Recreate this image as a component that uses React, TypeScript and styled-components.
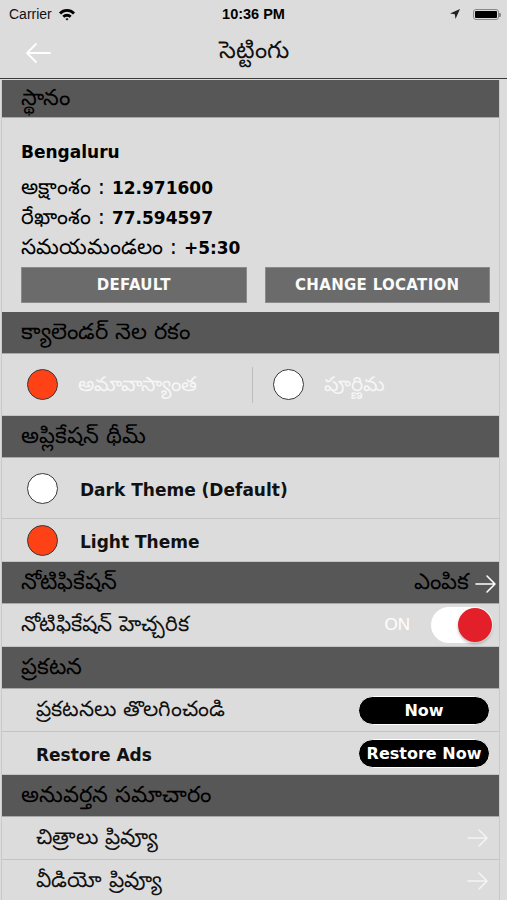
import React from "react";
import styled, { createGlobalStyle } from "styled-components";

const GlobalStyle = createGlobalStyle`
  html, body {
    margin: 0;
    padding: 0;
    background: #dcdcdc;
    font-family: "DejaVu Sans", "Noto Sans", sans-serif;
  }
`;

function App() {
  return (
    <Page>
      <GlobalStyle />
      <StatusBar>
        <Carrier>
          Carrier
          <svg width="18" height="13" viewBox="0 0 18 13">
            <path d="M1 4.5 A11 11 0 0 1 17 4.5 L15 6.5 A8 8 0 0 0 3 6.5 Z" fill="#000" />
            <path d="M4.3 7.8 A6.5 6.5 0 0 1 13.7 7.8 L11.7 9.8 A3.7 3.7 0 0 0 6.3 9.8 Z" fill="#000" />
            <path d="M7.5 11 A2.2 2.2 0 0 1 10.5 11 L9 12.6 Z" fill="#000" />
          </svg>
        </Carrier>
        <Clock>10:36 PM</Clock>
        <StatusRight>
          <svg width="12" height="12" viewBox="0 0 12 12">
            <path d="M11 1 L1 5.5 L5.8 6.2 L6.5 11 Z" fill="#222" />
          </svg>
          <Battery>
            <BatteryFill />
          </Battery>
        </StatusRight>
      </StatusBar>
      <NavBar>
        <BackButton>
          <svg width="28" height="22" viewBox="0 0 28 22">
            <path d="M26 11 H3 M12 2 L3 11 L12 20" stroke="#fff" strokeWidth="1.8" fill="none" strokeLinecap="round" strokeLinejoin="round" />
          </svg>
        </BackButton>
        <Title>సెట్టింగు</Title>
      </NavBar>
      <List>
        <SectionHeader $h={38}>స్థానం</SectionHeader>
        <LocationCard>
          <CityName>Bengaluru</CityName>
          <InfoLine>అక్షాంశం : <Num>12.971600</Num></InfoLine>
          <InfoLine>రేఖాంశం : <Num>77.594597</Num></InfoLine>
          <InfoLine>సమయమండలం : <Num>+5:30</Num></InfoLine>
          <ButtonRow>
            <GreyButton>DEFAULT</GreyButton>
            <GreyButton>CHANGE LOCATION</GreyButton>
          </ButtonRow>
        </LocationCard>

        <SectionHeader>క్యాలెండర్ నెల రకం</SectionHeader>
        <RadioPair>
          <RadioOption>
            <Radio $on />
            <RadioLabel>అమావాస్యాంత</RadioLabel>
          </RadioOption>
          <VDivider />
          <RadioOption>
            <Radio />
            <RadioLabel>పూర్ణిమ</RadioLabel>
          </RadioOption>
        </RadioPair>

        <SectionHeader>అప్లికేషన్ థీమ్</SectionHeader>
        <ThemeRow $h={61}>
          <Radio />
          <EnglishLabel>Dark Theme (Default)</EnglishLabel>
        </ThemeRow>
        <ThemeRow $h={43}>
          <Radio $on />
          <EnglishLabel>Light Theme</EnglishLabel>
        </ThemeRow>

        <SectionHeader>
          <span>నోటిఫికేషన్</span>
          <HeaderAction>
            ఎంపిక
            <Arrow color="#fff" />
          </HeaderAction>
        </SectionHeader>
        <Row $indent={19}>
          <RowText>నోటిఫికేషన్ హెచ్చరిక</RowText>
          <ToggleWrap>
            <OnText>ON</OnText>
            <Toggle>
              <Knob />
            </Toggle>
          </ToggleWrap>
        </Row>

        <SectionHeader>ప్రకటన</SectionHeader>
        <Row $indent={34}>
          <RowText>ప్రకటనలు తొలగించండి</RowText>
          <PillButton>Now</PillButton>
        </Row>
        <Row $indent={34}>
          <EnglishLabel>Restore Ads</EnglishLabel>
          <PillButton>Restore Now</PillButton>
        </Row>

        <SectionHeader>అనువర్తన సమాచారం</SectionHeader>
        <Row $indent={34}>
          <RowText>చిత్రాలు ప్రివ్యూ</RowText>
          <Arrow color="#f4f4f4" />
        </Row>
        <Row $indent={34}>
          <RowText>వీడియో ప్రివ్యూ</RowText>
          <Arrow color="#f4f4f4" />
        </Row>
      </List>
    </Page>
  );
}

function Arrow({ color }: { color: string }) {
  return (
    <ArrowBox>
      <svg width="24" height="20" viewBox="0 0 24 20">
        <path d="M2 10 H21 M13 2 L21 10 L13 18" stroke={color} strokeWidth="1.6" fill="none" strokeLinecap="round" strokeLinejoin="round" />
      </svg>
    </ArrowBox>
  );
}

export default App;

const Page = styled.div`
  width: 507px;
  height: 900px;
  overflow: hidden;
  background: #dcdcdc;
  color: #000;
`;

const StatusBar = styled.div`
  height: 28px;
  display: flex;
  align-items: center;
  justify-content: space-between;
  padding: 0 8px 0 9px;
  font-family: "Liberation Sans", Arial, sans-serif;
  font-size: 14px;
  position: relative;
`;

const Carrier = styled.div`
  display: flex;
  align-items: center;
  gap: 6px;
  color: #111;
`;

const Clock = styled.div`
  position: absolute;
  left: 0;
  right: 0;
  text-align: center;
  font-weight: bold;
  font-size: 14.5px;
  pointer-events: none;
`;

const StatusRight = styled.div`
  display: flex;
  align-items: center;
  gap: 12px;
`;

const Battery = styled.div`
  width: 26px;
  height: 11px;
  border: 1px solid #888;
  border-radius: 3px;
  padding: 1px;
  box-sizing: border-box;
  position: relative;
  &::after {
    content: "";
    position: absolute;
    right: -3px;
    top: 3px;
    width: 2px;
    height: 4px;
    background: #888;
    border-radius: 0 1px 1px 0;
  }
`;

const BatteryFill = styled.div`
  width: 100%;
  height: 100%;
  background: #000;
  border-radius: 1px;
`;

const NavBar = styled.div`
  height: 50px;
  display: flex;
  align-items: center;
  justify-content: center;
  position: relative;
  border-bottom: 1px solid #3a3a3a;
`;

const BackButton = styled.div`
  position: absolute;
  left: 24px;
  top: 14px;
`;

const Title = styled.div`
  font-size: 24px;
  color: #111;
`;

const List = styled.div`
  margin-top: 1px;
  width: 497px;
  border-left: 1px solid #c9c9c9;
  border-right: 1px solid #c9c9c9;
  margin-left: 1px;
`;

const SectionHeader = styled.div<{ $h?: number }>`
  height: ${(p) => (p.$h ?? 42)}px;
  background: #575757;
  border-bottom: 1px solid #a8a8a8;
  box-sizing: border-box;
  display: flex;
  align-items: center;
  justify-content: space-between;
  padding: 2px 9px 0 19px;
  font-size: 22.5px;
  color: #000;
`;

const HeaderAction = styled.div`
  display: flex;
  align-items: center;
  gap: 5px;
  margin-right: -8px;
`;

const LocationCard = styled.div`
  padding: 19px 9px 10px 19px;
  height: 194px;
  box-sizing: border-box;
`;

const CityName = styled.div`
  font-size: 17px;
  font-weight: bold;
  height: 30px;
  line-height: 30px;
  margin-bottom: 5px;
`;

const InfoLine = styled.div`
  font-size: 21.5px;
  height: 30px;
  line-height: 30px;
  white-space: nowrap;
`;

const Num = styled.span`
  font-size: 17px;
  font-weight: bold;
`;

const ButtonRow = styled.div`
  display: flex;
  gap: 18px;
  margin-top: 5px;
`;

const GreyButton = styled.div`
  flex: 1;
  height: 36px;
  background: #6b6b6b;
  color: #fafafa;
  display: flex;
  align-items: center;
  justify-content: center;
  font-size: 15px;
  font-weight: bold;
  letter-spacing: 0.3px;
  box-shadow: 0 0 0 1px #8a8a8a inset;
`;

const RadioPair = styled.div`
  height: 62px;
  display: flex;
  align-items: center;
  border-bottom: 1px solid #c4c4c4;
  box-sizing: border-box;
  padding-left: 25px;
`;

const RadioOption = styled.div`
  display: flex;
  align-items: center;
  gap: 20px;
  width: 225px;
`;

const VDivider = styled.div`
  width: 1px;
  height: 36px;
  background: #bdbdbd;
  margin-right: 20px;
`;

const Radio = styled.div<{ $on?: boolean }>`
  width: 31px;
  height: 31px;
  border-radius: 50%;
  border: 1.5px solid #3a3a3a;
  box-sizing: border-box;
  background: ${(p) => (p.$on ? "#ff4116" : "#ffffff")};
  flex-shrink: 0;
`;

const RadioLabel = styled.div`
  font-size: 20.5px;
  color: #f6f6f6;
  padding-top: 4px;
`;

const ThemeRow = styled.div<{ $h: number }>`
  height: ${(p) => p.$h}px;
  display: flex;
  align-items: center;
  gap: 22px;
  padding-left: 25px;
  border-bottom: 1px solid #c4c4c4;
  box-sizing: border-box;
`;

const EnglishLabel = styled.div`
  font-size: 17px;
  font-weight: bold;
  color: #111;
  padding-top: 3px;
`;

const Row = styled.div<{ $indent: number }>`
  height: 43px;
  display: flex;
  align-items: center;
  justify-content: space-between;
  padding: 0 9px 0 ${(p) => p.$indent}px;
  border-bottom: 1px solid #c4c4c4;
  box-sizing: border-box;
`;

const RowText = styled.div`
  font-size: 21.5px;
  color: #111;
  padding-top: 2px;
`;

const ToggleWrap = styled.div`
  display: flex;
  align-items: center;
  gap: 21px;
  margin-right: -3px;
`;

const OnText = styled.div`
  color: #fff;
  font-family: "Liberation Sans", Arial, sans-serif;
  font-size: 17px;
`;

const Toggle = styled.div`
  width: 62px;
  height: 36px;
  border-radius: 18px;
  background: #ffffff;
  display: flex;
  align-items: center;
  justify-content: flex-end;
  padding: 1px;
  box-sizing: border-box;
`;

const Knob = styled.div`
  width: 34px;
  height: 34px;
  border-radius: 50%;
  background: #e3202a;
  box-shadow: 0 2px 3px rgba(0, 0, 0, 0.25);
`;

const PillButton = styled.div`
  width: 132px;
  height: 29px;
  border-radius: 15px;
  background: #000;
  color: #fff;
  border: 1px solid #fff;
  box-sizing: border-box;
  display: flex;
  align-items: center;
  justify-content: center;
  font-size: 16px;
  font-weight: bold;
`;

const ArrowBox = styled.div`
  display: flex;
  align-items: center;
`;
